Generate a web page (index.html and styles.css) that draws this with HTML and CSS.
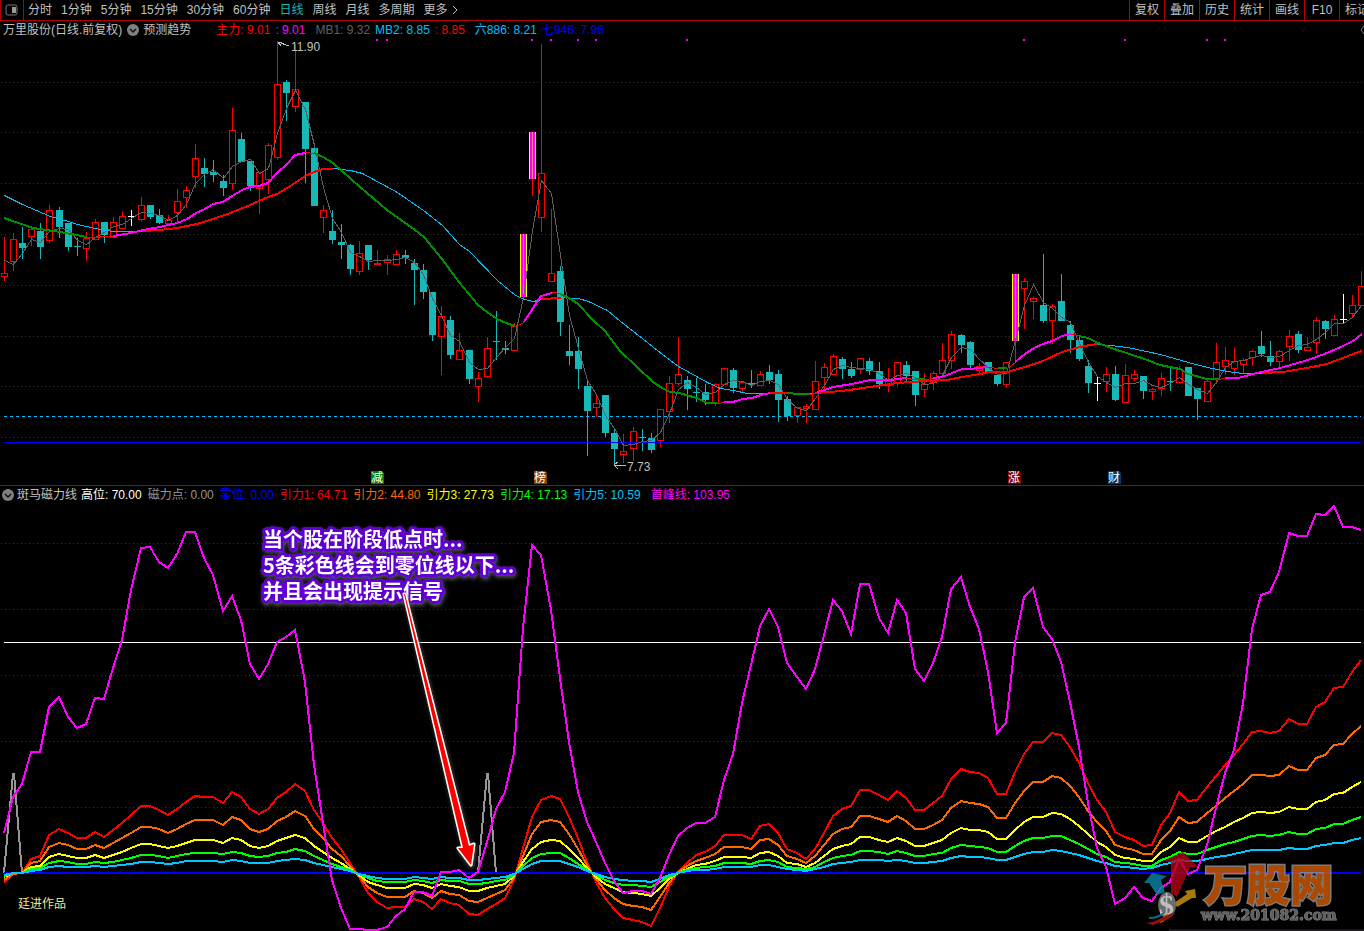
FILE: index.html
```
<!DOCTYPE html>
<html lang="zh-CN">
<head>
  <meta charset="UTF-8" />
  <meta name="viewport" content="width=device-width, initial-scale=1.0"/>
  <title>万里股份 日线</title>
  <link rel="stylesheet" href="styles.css">
</head>
<body>

  <header class="toolbar">
    <button class="layout-btn" aria-label="布局">
      <svg width="14" height="12" viewBox="0 0 14 12"><rect x="1" y="1" width="11" height="10" rx="2" fill="none" stroke="#777" stroke-width="1"/><rect x="7" y="3" width="4" height="6" fill="#999"/></svg>
    </button>
    <nav class="periods">
      <button>分时</button>
      <button>1分钟</button>
      <button>5分钟</button>
      <button>15分钟</button>
      <button>30分钟</button>
      <button>60分钟</button>
      <button class="active">日线</button>
      <button>周线</button>
      <button>月线</button>
      <button>多周期</button>
      <button class="more">更多<svg width="6" height="10" viewBox="0 0 6 10"><path d="M1 1L5 5L1 9" fill="none" stroke="#c0c0c0"/></svg></button>
    </nav>
    <div class="tools">
      <button>复权</button>
      <button>叠加</button>
      <button>历史</button>
      <button>统计</button>
      <button>画线</button>
      <button>F10</button>
      <button class="cut">标记</button>
    </div>
  </header>

  <section class="panel">
    <div class="info">
      <span class="stock">万里股份(日线.前复权)</span>
      <button class="drop" aria-label="指标菜单"><svg width="12" height="12" viewBox="0 0 12 12"><circle cx="6" cy="6" r="6" fill="#808080"/><path d="M3 5L6 8L9 5" fill="none" stroke="#111" stroke-width="1.5"/></svg></button>
      <span class="indicator">预测趋势</span>
      <span class="group first"><span class="red">主力: 9.01</span><span class="magenta">: 9.01</span></span>
      <span class="group"><span class="dim">MB1: 9.32</span><span class="sky">MB2: 8.85</span><span class="red">: 8.85</span></span>
      <span class="group"><span class="sky">六886: 8.21</span><span class="blue">七946: 7.96</span></span>
      <button class="fold" aria-label="展开"><svg width="4" height="8" viewBox="0 0 4 8"><path d="M4 0L1 4L4 8" fill="none" stroke="#777"/></svg></button>
    </div>
    <svg class="chart" id="priceChart" viewBox="0 39 1364 446"></svg>
  </section>

  <section class="panel lower">
    <div class="info">
      <button class="drop" aria-label="指标菜单"><svg width="12" height="12" viewBox="0 0 12 12"><circle cx="6" cy="6" r="6" fill="#808080"/><path d="M3 5L6 8L9 5" fill="none" stroke="#111" stroke-width="1.5"/></svg></button>
      <span class="indicator">斑马磁力线</span>
      <span class="values">
        <span class="white">高位: 70.00</span>
        <span class="gray">磁力点: 0.00</span>
        <span class="blue">零位: 0.00</span>
        <span class="red">引力1: 64.71</span>
        <span class="orange">引力2: 44.80</span>
        <span class="yellow">引力3: 27.73</span>
        <span class="green">引力4: 17.13</span>
        <span class="cyan">引力5: 10.59</span>
        <span class="magenta peak">首峰线: 103.95</span>
      </span>
    </div>
    <svg class="chart" id="forceChart" viewBox="0 504 1364 427">
      <defs>
        <filter id="glow" x="-10%" y="-10%" width="120%" height="120%">
          <feDropShadow dx="1" dy="2" stdDeviation="2" flood-color="#555"/>
        </filter>
      </defs>
      <g id="forcePlot"></g>
      <g class="note" filter="url(#glow)">
        <text x="263" y="547">当个股在阶段低点时...</text>
        <text x="263" y="573">5条彩色线会到零位线以下...</text>
        <text x="263" y="599">并且会出现提示信号</text>
      </g>
      <path class="pointer" d="M404 594L405 594L469 846L474 844L471 865L458 848L463 848Z" filter="url(#glow)"/>
      <text class="author" x="18" y="908">廷进作品</text>
      <rect x="1169" y="929" width="195" height="2" fill="#1c1a1c"/>
      <g class="watermark">
        <path fill="#b00614" d="M1183 852L1198 867L1190 867L1177 897L1171 893L1171 862L1163 861Z"/>
        <path fill="#0b87a8" d="M1144 883L1152 873L1167 876L1161 880L1165 892L1157 895L1149 883Z"/>
        <path fill="#d09a10" d="M1174 903L1187 894L1185 891L1195 889L1196 898L1192 898L1177 907Z"/>
        <ellipse cx="1167" cy="905" rx="9" ry="13" fill="#888"/>
        <text class="dollar" x="1159" y="915">$</text>
        <path fill="none" stroke="#0b87a8" stroke-width="2" d="M1149 918Q1158 918 1164 913"/>
        <path fill="none" stroke="#d09a10" stroke-width="2" d="M1160 922Q1166 920 1167 914"/>
        <path fill="#c01010" d="M1146 923L1153 922L1174 912L1170 918L1153 925Z"/>
        <text class="brand" x="1204" y="901">万股网</text>
        <text class="site" x="1201" y="920">www.201082.com</text>
      </g>
    </svg>
  </section>

  <script src="chart.js"></script>
</body>
</html>
```

FILE: styles.css
```
body {
  margin: 0;
  background: #000;
  color: #c0c0c0;
  font-family: "Liberation Sans", "Noto Sans CJK SC", sans-serif;
  font-size: 12px;
  line-height: 18px;
  overflow: hidden;
}
button {
  background: none;
  border: 0;
  padding: 0;
  margin: 0;
  color: inherit;
  font: inherit;
  white-space: nowrap;
  cursor: pointer;
}

/* Toolbar */
.toolbar {
  display: flex;
  height: 20px;
  border-bottom: 1px solid #b40000;
}
.layout-btn {
  display: flex;
  align-items: center;
  justify-content: center;
  width: 24px;
  box-sizing: border-box;
  border-left: 1px solid #b40000;
  border-right: 1px solid #b40000;
}
.periods {
  display: flex;
  gap: 9px;
  padding-left: 4px;
}
.periods .active {
  color: #18b8b8;
}
.more {
  display: flex;
  align-items: center;
  gap: 4px;
}
.tools {
  display: flex;
  margin-left: auto;
}
.tools button {
  width: 35px;
  box-sizing: border-box;
  border-left: 1px solid #b40000;
}
.tools .cut {
  width: 25px;
  padding-left: 5px;
  text-align: left;
  overflow: hidden;
}

/* Indicator rows */
.info {
  display: flex;
  align-items: center;
  height: 18px;
  padding-left: 3px;
  white-space: nowrap;
}
.drop {
  display: flex;
  margin: 0 4px 0 5px;
}
.group {
  display: flex;
  gap: 5px;
  margin-left: 10px;
}
.group.first {
  margin-left: 25px;
}
.fold {
  display: flex;
  margin-left: auto;
}
.values {
  display: flex;
  gap: 6px;
  margin-left: 4px;
}
.peak {
  margin-left: 4px;
}
.lower {
  border-top: 1px solid #b40000;
}
.lower .info {
  padding-left: 2px;
}
.lower .drop {
  margin: 0 3px 0 0;
}
.red { color: #f00; }
.magenta { color: #f0f; }
.dim { color: #606060; }
.sky { color: #00bfff; }
.blue { color: #00f; }
.white { color: #fff; }
.gray { color: #969696; }
.orange { color: #ff6a00; }
.yellow { color: #ff0; }
.green { color: #0f0; }
.cyan { color: #00c8ff; }

/* Charts */
.chart {
  display: block;
  width: 100%;
  height: auto;
}
.chart text {
  fill: #c0c0c0;
}
.plot {
  shape-rendering: crispEdges;
  fill: none;
}
.grid {
  stroke: #a00000;
  stroke-dasharray: 1 3;
}
.chart .tag {
  fill: #fff;
  font-size: 12px;
}
.chart .note text {
  fill: #fff;
  stroke: #6000d0;
  stroke-width: 6px;
  stroke-linejoin: round;
  paint-order: stroke;
  font-family: "Noto Sans CJK SC", sans-serif;
  font-size: 20px;
  font-weight: bold;
}
.pointer {
  fill: #f00;
  stroke: #fff;
  stroke-width: 3px;
  stroke-linejoin: round;
  paint-order: stroke;
}
.chart .author {
  fill: #f0e68c;
}
.watermark {
  opacity: 0.8;
}
.watermark .dollar {
  fill: #eee;
  font-family: "Liberation Serif", serif;
  font-size: 30px;
  font-weight: bold;
}
.watermark .brand {
  fill: #d85c00;
  stroke: #999;
  stroke-width: 3px;
  paint-order: stroke;
  font-family: "Noto Sans CJK SC", sans-serif;
  font-size: 43px;
  font-weight: 900;
}
.watermark .site {
  fill: #777;
  stroke: #aaa;
  stroke-width: 1px;
  paint-order: stroke;
  font-family: "DejaVu Serif", serif;
  font-size: 14px;
  font-weight: bold;
}
```

FILE: chart.js
```
const NS = 'http://www.w3.org/2000/svg';
const RED = '#f00', TEAL = '#18b8b8', WHITE = '#fff';
const MAGENTA = '#f0f', GREEN = '#009000', SKY = '#00bfff', GRAY = '#606060';

function add(parent, name, attrs, text) {
  const el = document.createElementNS(NS, name);
  for (const key in attrs) el.setAttribute(key, attrs[key]);
  if (text) el.textContent = text;
  parent.appendChild(el);
  return el;
}

// 150 bars, 9px apart with one extra pixel every ninth bar
const barX = i => 4 + 9 * i + Math.floor((i + 3) / 9);

function line(parent, points, color, width) {
  const shift = width % 2 ? 0.5 : 0;
  add(parent, 'polyline', {
    points: points.map(p => (p[0] + shift) + ',' + (p[1] + shift)).join(' '),
    stroke: color,
    'stroke-width': width
  });
}

function series(parent, values, color, width) {
  line(parent, values.map((y, i) => [barX(i), y]), color, width);
}

function hline(parent, y, color, width, dash) {
  const el = add(parent, 'line', { x1: 4, x2: 1361, y1: y, y2: y, stroke: color, 'stroke-width': width });
  if (dash) el.setAttribute('stroke-dasharray', dash);
}

// kind, high, body top, body bottom, low
const bars = [
  'r 237 273 276 281', 'r 233 239 261 271', 't 227 243 248 259', 'r 229 229 236 246', 't 223 231 247 259',
  'r 205 210 240 243', 't 207 210 227 238', 't 223 223 247 251', 't 238 246 246 256', 'r 232 238 248 261',
  'r 219 222 239 239', 't 222 222 235 243', 'r 217 222 237 237', 'r 211 216 228 228', 'w 210 216 216 226',
  'r 197 205 219 222', 't 205 205 217 219', 't 209 215 223 224', 'r 215 220 223 223', 'r 189 201 212 222',
  'r 186 190 197 208', 'r 144 158 176 188', 't 158 168 174 187', 't 160 172 175 182', 't 175 181 188 196',
  'r 108 130 183 190', 't 133 139 162 162', 't 161 161 186 191', 'r 172 172 188 214', 'r 143 145 179 194',
  'r 41 84 157 160', 't 80 82 93 121', 'r 44 89 106 112', 't 102 102 149 183', 't 144 148 206 206',
  'r 205 210 217 233', 't 210 231 240 244', 't 224 242 245 259', 't 244 245 269 275', 'r 241 253 271 275',
  't 245 245 260 270', 'r 250 263 264 264', 'r 255 259 262 275', 'r 250 254 264 264', 't 250 255 258 264',
  't 259 263 270 305', 't 264 270 292 299', 't 292 292 335 341', 'r 306 316 336 375', 't 316 320 355 359',
  'r 333 350 359 360', 't 350 350 379 384', 'r 372 378 386 402', 'r 337 348 376 378', 't 311 341 341 360',
  't 341 348 350 354', 'r 323 326 350 350', 'b 234 234 297 297', 'b 132 132 179 196', 'r 44 173 217 232',
  'r 209 273 281 281', 't 266 271 322 336', 't 325 351 356 365', 't 337 351 369 389', 't 380 386 411 456',
  'r 396 403 407 417', 't 395 395 433 437', 't 428 433 449 464', 'r 434 451 454 463', 'r 427 431 448 461',
  't 429 437 437 451', 't 433 438 450 453', 'r 409 409 440 447', 'r 376 383 411 423', 'r 337 374 383 385',
  't 376 380 389 410', 't 378 392 392 402', 't 384 392 400 405', 'r 383 384 403 406', 'r 368 368 384 385',
  't 368 370 388 393', 'r 381 382 388 392', 't 370 383 385 388', 'r 371 374 385 386', 't 365 372 380 384',
  't 370 374 400 422', 't 396 399 416 421', 'r 407 407 415 423', 'r 404 406 408 423', 'r 361 381 409 409',
  'r 363 367 377 390', 'r 354 356 374 375', 't 357 359 369 379', 't 362 369 376 378', 'r 358 358 369 374',
  't 358 361 371 375', 't 362 371 384 389', 'r 368 381 385 392', 'r 362 362 382 387', 't 361 365 376 381',
  't 371 371 395 406', 'r 373 384 389 397', 'r 371 373 382 390', 'r 343 360 373 375', 'r 331 334 360 369',
  't 334 335 345 353', 't 341 342 365 369', 'r 363 366 370 373', 't 362 362 372 372', 't 375 375 384 386',
  'r 362 362 384 388', 'b 274 274 341 362', 'r 278 281 288 329', 'r 297 298 301 319', 't 254 305 321 323',
  'r 304 306 320 344', 't 274 301 321 321', 't 321 325 340 353', 't 336 340 359 361', 't 360 366 383 393',
  'w 377 383 383 401', 'r 367 374 381 392', 't 366 374 400 401', 'r 364 375 402 402', 'r 370 374 378 381',
  't 376 376 391 399', 'r 388 389 391 400', 'r 373 378 388 396', 't 368 381 381 391', 'r 366 369 382 382',
  't 367 367 396 396', 't 388 388 399 420', 'r 380 381 401 401', 'r 343 362 378 384', 'r 347 360 366 375',
  'r 348 361 368 375', 'r 358 360 364 373', 'r 350 351 357 366', 't 331 346 354 357', 't 341 356 362 366',
  'r 350 351 361 367', 'r 330 336 346 361', 't 331 334 350 353', 'r 337 347 350 350', 'r 317 320 342 354',
  't 320 321 329 339', 'r 315 319 335 335', 'w 294 319 319 323', 'r 295 305 313 318', 'r 271 286 305 305'
];

function drawBar(g, i) {
  const part = bars[i].split(' ');
  const kind = part[0];
  const [high, top, bottom, low] = part.slice(1).map(Number);
  const x = barX(i);
  const color = { r: RED, t: TEAL, w: WHITE, b: RED }[kind];
  const wick = (from, to) => {
    if (to > from) add(g, 'rect', { x: x, y: from, width: 1, height: to - from, fill: color });
  };
  wick(high, top);
  wick(bottom, low);
  if (kind === 'b') {
    // limit-up marker: yellow rim, magenta fill
    add(g, 'rect', { x: x - 3, y: top, width: 7, height: bottom - top, fill: '#ff0' });
    add(g, 'rect', { x: x - 2, y: top, width: 5, height: bottom - top, fill: MAGENTA });
    add(g, 'rect', { x: x, y: top, width: 1, height: bottom - top, fill: '#ff8080' });
  } else if (top === bottom) {
    add(g, 'rect', { x: x - 3, y: top, width: 7, height: 1, fill: color });
  } else if (kind === 'r') {
    add(g, 'rect', { x: x - 2.5, y: top + 0.5, width: 6, height: bottom - top, stroke: RED, fill: '#000' });
  } else {
    add(g, 'rect', { x: x - 3, y: top, width: 7, height: bottom - top, fill: color });
  }
}

const shortAvg = [
  260, 264, 253, 239, 242, 231, 228, 229, 240, 244, 237, 232, 226, 224, 218, 212, 213, 215, 220, 215,
  204, 183, 174, 169, 178, 166, 161, 159, 173, 168, 133, 108, 90, 109, 145, 187, 218, 232, 252, 256,
  261, 260, 260, 259, 257, 262, 274, 298, 315, 335, 341, 362, 369, 368, 357, 347, 338, 297, 230, 180,
  193, 255, 315, 348, 380, 394, 415, 428, 445, 444, 441, 440, 432, 413, 389, 382, 387, 394, 392, 384,
  380, 381, 385, 381, 380, 384, 399, 408, 410, 398, 385, 369, 365, 367, 368, 369, 373, 380, 375, 373,
  377, 384, 383, 375, 357, 347, 349, 359, 367, 374, 373, 340, 305, 284, 302, 308, 317, 322, 343, 362,
  376, 382, 387, 383, 383, 380, 385, 387, 383, 377, 384, 389, 393, 382, 367, 361, 360, 357, 355, 357,
  356, 350, 345, 344, 339, 332, 323, 323, 317, 305
];

// [color, width, points]: rising and falling stretches are coloured apart
const midAvg = [
  [GREEN, 2, [[4,218],[33,228],[60,232],[87,237]]],
  [RED, 1, [[87,237],[113,236]]],
  [MAGENTA, 2, [[113,236],[131,233],[143,230],[160,227],[177,223],[187,219],[196,213],[205,209],[213,204],[223,202],[232,196],[242,190],[250,187],[259,186],[268,183],[277,173],[287,164],[295,155],[305,153]]],
  [RED, 1, [[305,152],[314,153]]],
  [GREEN, 2, [[314,153],[323,157],[333,163],[342,171],[360,187],[387,210],[415,230],[424,237],[442,259],[459,282],[478,305],[487,312],[497,319],[506,323],[515,326]]],
  [RED, 1, [[515,326],[524,322]]],
  [MAGENTA, 2, [[524,322],[533,308],[541,296],[552,293]]],
  [RED, 1, [[552,292],[560,293]]],
  [GREEN, 2, [[560,294],[569,298],[578,304],[593,320],[605,331],[620,351],[637,367],[653,382],[662,388],[670,392],[679,393],[697,398],[707,403],[717,403]]],
  [RED, 1, [[717,403],[724,402]]],
  [MAGENTA, 2, [[724,402],[733,402],[743,399],[752,398],[761,395],[770,393]]],
  [RED, 2, [[770,393],[788,393]]],
  [GREEN, 2, [[788,393],[798,394],[810,394]]],
  [RED, 1, [[810,394],[817,392]]],
  [MAGENTA, 2, [[817,392],[825,390],[833,387],[852,384],[861,382],[870,380],[890,380],[906,378]]],
  [RED, 1, [[906,378],[915,379]]],
  [GREEN, 2, [[915,379],[925,379]]],
  [RED, 1, [[925,379],[933,378]]],
  [MAGENTA, 2, [[933,378],[942,377],[952,373],[962,369],[970,369],[978,368],[988,367]]],
  [RED, 1, [[988,367],[998,368]]],
  [GREEN, 2, [[998,368],[1007,368]]],
  [RED, 1, [[1007,368],[1015,362]]],
  [MAGENTA, 2, [[1015,362],[1025,354],[1034,348],[1043,344],[1052,341],[1062,336],[1071,334]]],
  [RED, 1, [[1071,334],[1079,335]]],
  [GREEN, 2, [[1079,336],[1088,338],[1098,343],[1117,350],[1142,358],[1160,365],[1180,369],[1188,374],[1207,379],[1217,379]]],
  [RED, 1, [[1217,379],[1225,378]]],
  [MAGENTA, 2, [[1225,378],[1238,378],[1257,373],[1280,368],[1308,360],[1327,353],[1343,346],[1353,341],[1362,334]]]
];

const longAvg = [
  [SKY, 1, [[4,195],[22,204],[50,216],[68,221],[77,224],[95,228],[112,231],[142,231]]],
  [RED, 2, [[142,231],[160,230],[177,228],[197,224],[213,219],[233,212],[250,205],[268,197],[277,194],[287,188],[295,183],[305,176],[314,172],[323,169],[333,169]]],
  [SKY, 1, [[333,168],[350,170],[362,173],[397,192],[423,210],[442,225],[459,244],[469,251],[497,280],[515,295],[524,299],[533,301],[541,299]]],
  [RED, 2, [[541,299],[561,298]]],
  [SKY, 1, [[561,297],[578,298],[588,301],[607,310],[620,321],[633,331],[662,354],[678,366],[707,382],[720,388],[733,390],[747,393],[770,393]]],
  [RED, 2, [[770,393],[788,393]]],
  [SKY, 1, [[788,393],[815,393]]],
  [RED, 2, [[815,393],[842,391],[863,388],[897,383],[925,381],[947,380],[962,377],[980,374],[990,372],[1007,372],[1025,367],[1043,361],[1062,352],[1080,347],[1090,345],[1098,344]]],
  [SKY, 1, [[1098,344],[1110,345],[1127,347],[1160,354],[1188,362],[1207,367],[1227,371],[1242,373],[1262,373]]],
  [RED, 2, [[1262,373],[1283,372],[1307,368],[1327,364],[1343,358],[1353,354],[1362,351]]]
];

function drawPrice() {
  const svg = document.getElementById('priceChart');
  const g = add(svg, 'g', { class: 'plot' });
  for (const y of [82, 132, 183, 234, 285, 336, 386, 437]) {
    add(g, 'line', { class: 'grid', x1: 1, x2: 1364, y1: y + 0.5, y2: y + 0.5 });
  }
  bars.forEach((b, i) => drawBar(g, i));
  hline(g, 416.5, SKY, 1, '3 3');
  hline(g, 442.5, '#00f', 1);
  series(g, shortAvg, GRAY, 1);
  for (const [color, width, points] of longAvg.concat(midAvg)) line(g, points, color, width);

  for (const x of [376, 386, 531, 550, 577, 595, 686, 1023, 1124, 1206, 1224]) {
    add(g, 'rect', { x: x, y: 39, width: 2, height: 2, fill: MAGENTA });
  }

  // extreme prices
  add(g, 'path', { d: 'M278 42L289 46M278 42h4M278 42l3 4', stroke: '#c0c0c0' });
  add(svg, 'text', { x: 291, y: 51 }, '11.90');
  add(g, 'path', { d: 'M614 465.5H626M614 465l4 -3M614 465l4 4', stroke: '#c0c0c0' });
  add(svg, 'text', { x: 627, y: 471 }, '7.73');

  const tags = [[371, '减', '#008000'], [534, '榜', '#8a4000'], [1008, '涨', '#800000'], [1108, '财', '#003a70']];
  for (const [x, word, color] of tags) {
    add(svg, 'path', { d: `M${x} 471h11l2 2v11h-13z`, fill: color });
    add(svg, 'text', { class: 'tag', x: x, y: 482 }, word);
  }
}

const ZERO = 873;
const force = [
  883, 874, 873, 859, 856, 835, 829, 833, 838, 838, 832, 837, 830, 823, 815, 806, 806, 810, 815, 809,
  802, 796, 797, 797, 803, 792, 797, 809, 814, 809, 798, 792, 784, 791, 810, 823, 838, 849, 863, 877,
  893, 902, 908, 907, 907, 899, 902, 909, 899, 903, 905, 914, 915, 909, 904, 898, 880, 848, 817, 800,
  796, 799, 817, 838, 862, 882, 898, 909, 918, 920, 922, 926, 908, 887, 872, 863, 855, 852, 846, 835,
  835, 835, 839, 826, 824, 833, 849, 853, 859, 849, 833, 816, 809, 806, 790, 790, 795, 800, 791, 798,
  810, 810, 803, 796, 779, 769, 772, 773, 778, 794, 794, 772, 754, 742, 742, 733, 735, 747, 763, 783,
  800, 812, 832, 837, 840, 846, 845, 825, 813, 792, 801, 800, 787, 776, 765, 755, 744, 732, 731, 733,
  731, 719, 724, 724, 707, 702, 688, 687, 672, 660
];
const peak = [
  833, 797, 784, 752, 752, 707, 697, 717, 728, 724, 698, 699, 668, 640, 590, 548, 547, 562, 568, 554,
  532, 532, 558, 575, 611, 596, 620, 664, 679, 664, 642, 637, 630, 682, 765, 823, 880, 908, 929, 929,
  930, 930, 927, 916, 909, 892, 892, 896, 872, 872, 870, 878, 872, 842, 809, 792, 753, 628, 545, 555,
  610, 678, 742, 792, 822, 842, 863, 881, 893, 891, 891, 894, 878, 855, 836, 828, 823, 823, 817, 780,
  754, 703, 665, 626, 609, 627, 663, 677, 689, 669, 635, 600, 611, 634, 584, 584, 618, 633, 600, 613,
  669, 681, 663, 637, 589, 577, 607, 629, 672, 733, 723, 643, 597, 588, 627, 639, 662, 702, 747, 803,
  848, 867, 904, 898, 887, 898, 901, 888, 882, 859, 874, 870, 845, 808, 773, 750, 703, 629, 595, 592,
  572, 533, 536, 536, 514, 515, 506, 527, 527, 530
];

function drawForce() {
  const g = document.getElementById('forcePlot');
  g.setAttribute('class', 'plot');
  for (const y of [543, 609, 675, 741, 807]) {
    add(g, 'line', { class: 'grid', x1: 1, x2: 1364, y1: y + 0.5, y2: y + 0.5 });
  }
  hline(g, 642.5, WHITE, 1);
  line(g, [[4, 873], [13, 774], [14, 774], [22, 873]], '#969696', 2);
  line(g, [[478, 873], [487, 774], [488, 774], [496, 873]], '#969696', 2);
  hline(g, ZERO, '#00f', 2);
  const layers = [[1, '#f00'], [0.692, '#ff6a00'], [0.428, '#ff0'], [0.265, '#0f0'], [0.162, '#00c8ff']];
  for (const [ratio, color] of layers) {
    series(g, force.map(y => Math.round(ZERO + (y - ZERO) * ratio)), color, 2);
  }
  series(g, peak, MAGENTA, 2);
}

drawPrice();
drawForce();
```
